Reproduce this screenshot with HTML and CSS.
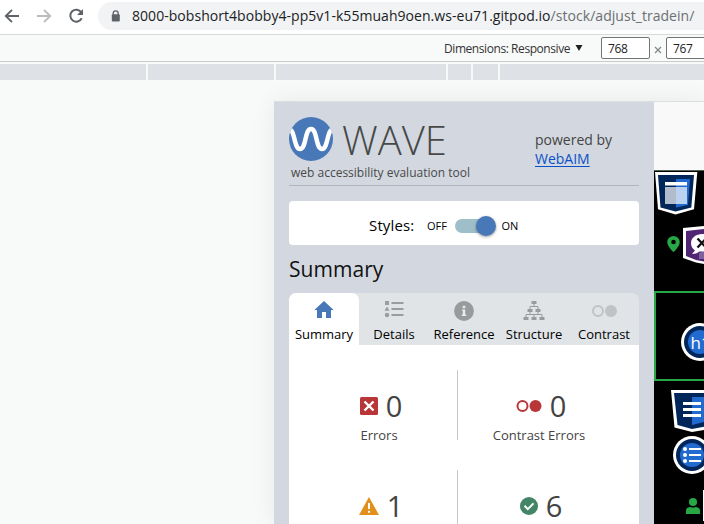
FILE: index.html
```html
<!DOCTYPE html>
<html lang="en">
<head>
<meta charset="utf-8">
<title>WAVE</title>
<link rel="stylesheet" href="styles.css">
</head>
<body>
<header class="browser">
  <svg class="nav" width="98" height="34" viewBox="0 0 98 34" fill="none" stroke-width="1.9">
    <path d="M19 16H7M12 9.8L5.8 16l6.2 6.2" stroke="#5f6368"/>
    <path d="M37 16h12.500M44 9.800L50.200 16L44 22.200" stroke="#babcbe"/>
    <path d="M81.300 12.300A6 6 0 1 0 81.700 18.300" stroke="#5f6368" stroke-width="2"/>
    <path d="M83 9v6h-6z" fill="#5f6368"/>
  </svg>
  <div class="address">
    <svg width="10" height="13" viewBox="0 0 10 13"><path d="M2.200 5V3.400a2.500 2.500 0 0 1 5 0V5" fill="none" stroke="#5f6368" stroke-width="1.300"/><rect x=".8" y="4.200" width="8" height="7.300" rx="1" fill="#5f6368"/></svg>
    <span class="url">8000-bobshort4bobby4-pp5v1-k55muah9oen.ws-eu71.gitpod.io<span class="path">/stock/adjust_tradein/</span></span>
  </div>
</header>
<div class="devicebar">
  <span class="dims">Dimensions: Responsive</span>
  <svg class="caret" width="8" height="8" viewBox="0 0 8 8"><path d="M.5 1h7L4 7z" fill="#202124"/></svg>
  <span class="size">768</span>
  <svg class="times" width="8" height="8" viewBox="0 0 8 8"><path d="M1 1l6 6M7 1L1 7" stroke="#80868b" stroke-width="1.200"/></svg>
  <span class="size">767</span>
</div>
<div class="ruler"><i></i><i></i><i></i><i></i><i></i><i></i></div>
<main class="viewport">
  <section class="wave">
    <div class="brand">
      <svg class="logo" width="44" height="44" viewBox="0 0 44 44"><defs><clipPath id="disc"><circle cx="22" cy="22" r="22"/></clipPath></defs><circle cx="22" cy="22" r="22" fill="#4878b8"/><path clip-path="url(#disc)" d="M-1 13C6 9 4.500 32 11 32S15.500 12 22 12S26.500 32 33 32S38 9 45 13" fill="none" stroke="#fff" stroke-width="4.500"/></svg>
      <h1 class="name">WAVE</h1>
      <div class="power">powered by<br><a href="#">WebAIM</a></div>
      <p class="tagline">web accessibility evaluation tool</p>
    </div>
    <div class="styles">
      <span class="styles-label">Styles:</span><span class="off">OFF</span>
      <span class="switch"><span class="knob"></span></span><span class="on">ON</span>
    </div>
    <h2 class="heading">Summary</h2>
    <nav class="tabs">
      <div class="tab active"><svg width="20" height="20" viewBox="0 0 20 20"><path d="M10 1L.3 10H3v8h5v-6h4v6h5v-8h2.700z" fill="#4878b8"/></svg><span>Summary</span></div>
      <div class="tab"><svg width="20" height="20" viewBox="0 0 20 20" fill="#9a9c9e"><rect x="1" y="1" width="4" height="4"/><path d="M3 6.500l2.500 4.200h-5z"/><circle cx="3" cy="15" r="2.200"/><path d="M7.500 2h12v2h-12zM7.500 8h12v2h-12zM7.500 14h12v2h-12z"/></svg><span>Details</span></div>
      <div class="tab"><svg class="info" width="20" height="20" viewBox="0 0 20 20"><circle cx="10" cy="10" r="9.900" fill="#989a9c"/><path d="M8.700 4.800h2.600v2.400H8.700zM8.200 8.500h3v5h1V15H7.800v-1.500h1V10h-.6z" fill="#e8eaec"/></svg><span>Reference</span></div>
      <div class="tab"><svg width="22" height="20" viewBox="0 0 22 20"><g fill="#999b9d"><path d="M8.500 1h5v3h-5zM4.500 9h5v3h-5zM12.500 9h5v3h-5zM.5 17h5v3h-5zM8.500 17h5v3h-5zM16.500 17h5v3h-5z"/></g><path d="M11 4v2.500M7 9V6.500h8V9M7 12v2.500M15 12v2.500M3 17v-2.500h16V17M11 14.500V17" fill="none" stroke="#999b9d"/></svg><span>Structure</span></div>
      <div class="tab"><svg width="26" height="20" viewBox="0 0 26 20"><circle cx="7" cy="11" r="5" fill="none" stroke="#c0c3c5" stroke-width="2"/><circle cx="20" cy="11" r="6" fill="#c0c3c5"/></svg><span>Contrast</span></div>
    </nav>
    <div class="results">
      <div class="cell"><div class="count"><svg width="18" height="18" viewBox="0 0 18 18"><rect width="18" height="18" rx="1.500" fill="#b93638"/><path d="M4.500 4.500l9 9M13.500 4.500l-9 9" stroke="#fff" stroke-width="2.400"/></svg><b>0</b></div><span class="kind">Errors</span></div>
      <div class="cell right"><div class="count"><svg width="26" height="14" viewBox="0 0 26 14"><circle cx="6.500" cy="7" r="5" fill="none" stroke="#b93638" stroke-width="2"/><circle cx="19.500" cy="7" r="6" fill="#b93638"/></svg><b>0</b></div><span class="kind">Contrast Errors</span></div>
      <div class="cell"><div class="count"><svg width="20" height="18" viewBox="0 0 20 18"><path d="M10 0l10 18H0z" fill="#e38f1c"/><path d="M9 6h2v6H9zM9 13.800h2v2H9z" fill="#fff"/></svg><b>1</b></div></div>
      <div class="cell right"><div class="count"><svg width="18" height="18" viewBox="0 0 18 18"><circle cx="9" cy="9" r="9" fill="#458567"/><path d="M4.500 8.800l3.300 3.300 5.700-5.700" fill="none" stroke="#fff" stroke-width="2"/></svg><b>6</b></div></div>
    </div>
  </section>
  <section class="page">
    <div class="topbar"></div>
    <div class="canvas">
      <svg width="50" height="354" viewBox="654 170 50 354">
        <path d="M654 170.500h50" stroke="#53604f"/>
        <path d="M655 172h42.300l-3.300 37.300-18.500 5.200-17.500-5.200z" fill="#fff"/>
        <path d="M658 175h36l-2.700 32.500-15.800 4-15-4z" fill="#00265a"/>
        <path d="M676 179h14l-2 26-12 2.500z" fill="#216bd0"/>
        <path d="M665 182h22v3.500h-22z" fill="#fff"/><path d="M665 187h11v17h-11z" fill="#b1bdcc"/><path d="M676 187h11v17h-11z" fill="#bad1ef"/>
        <path d="M673.500 236a6.200 6.200 0 0 0-6.200 6.200c0 4.500 6.200 9.800 6.200 9.800s6.200-5.300 6.200-9.800a6.200 6.200 0 0 0-6.200-6.200zm0 3.700a2.300 2.300 0 1 1 0 4.600 2.300 2.300 0 0 1 0-4.600z" fill="#28a745"/>
        <path d="M683 228l21-2v38l-8-1.500-13-4.500z" fill="#fff"/><path d="M686 231l18-2v32.500l-8-1.500-10-4z" fill="#502673"/>
        <path d="M699 253l5-2v8h-5z" fill="#8061a0"/>
        <path d="M702.500 234c-7 0-11.500 4-11.500 9 0 4 2 6 4 7.500l-3 3.500c4 0 6-1.500 7.500-2.500H704V234z" fill="#fff"/><path d="M697.500 238.500l8.500 9M697.500 247.500l8.500-9" stroke="#111" stroke-width="2.300"/>
        <path d="M704 292h-49v88h49" fill="none" stroke="#28a745" stroke-width="2"/>
        <circle cx="700" cy="342" r="19" fill="#fff"/><circle cx="700" cy="342" r="16" fill="#00265a"/><circle cx="700" cy="342" r="12" fill="#216bd0"/>
        <text class="h-mark" x="690.500" y="349">h1</text>
        <path d="M671 390h33v40l-12 2-17.500-4.500z" fill="#fff"/><path d="M674 393h30v33.800l-12 2.200-14.500-4z" fill="#00265a"/><path d="M692 397h12v25l-12 3z" fill="#216bd0"/>
        <path d="M683 402h18v3h-18zM683 408h18v3h-18zM683 414h18v3h-18z" fill="#fff"/>
        <circle cx="692" cy="455" r="19" fill="#fff"/><circle cx="692" cy="455" r="16" fill="#00265a"/><circle cx="692" cy="455" r="12" fill="#216bd0"/>
        <g fill="#fff"><circle cx="685" cy="449" r="2"/><circle cx="685" cy="455" r="2"/><circle cx="685" cy="461" r="2"/><path d="M689 448h12v2h-12zM689 454h12v2h-12zM689 460h12v2h-12z"/></g>
        <circle cx="693" cy="502" r="4" fill="#28a745"/><path d="M686 514v-3c0-3 2-4 4.500-4 1 .7 4 .7 5 0 2.500 0 4.500 1 4.500 4v3z" fill="#28a745"/>
        <path d="M703 490h1v31h-1z" fill="#fff"/>
      </svg>
    </div>
  </section>
</main>
</body>
</html>
```
FILE: styles.css
```css
* { box-sizing: border-box; }
body { margin: 0; width: 704px; height: 524px; overflow: hidden; background: #f8faf9; font-family: "Open Sans", sans-serif; color: #000; display: flex; flex-direction: column; white-space: nowrap; }
svg { display: block; flex: none; }
.browser { height: 35px; flex: none; display: flex; background: #fff; border-bottom: 1px solid #d5d9d8; }
.address { flex: 1; height: 28px; margin-top: 2px; border-radius: 14px 0 0 14px; background: #f1f3f4; display: flex; align-items: center; padding-left: 13px; gap: 11px; }
.url { font-size: 14px; letter-spacing: .045px; color: #202124; line-height: 28px; }
.path { color: #6b6f73; }
.devicebar { height: 27px; flex: none; border-bottom: 1px solid #c8cbca; display: flex; align-items: center; padding-left: 444px; font-size: 12px; color: #333; }
.dims { width: 131px; flex: none; letter-spacing: -.43px; }
.caret { margin-right: 18px; }
.size { width: 49px; height: 22px; flex: none; border: 1px solid #747474; border-radius: 2px; background: #fff; padding-left: 6px; line-height: 21px; letter-spacing: -.3px; color: #222; }
.times { margin: 4px 4px 0; }
.ruler { height: 18px; flex: none; padding-top: 2px; display: grid; grid-template-columns: 146px 126px 170px 23px 25px 204px; column-gap: 2px; }
.ruler i { background: #dee1e6; }
.viewport { flex: 1; min-height: 0; margin: 21px 0 0 274px; display: flex; border-top: 1px solid #dddfdf; box-shadow: 0 0 24px rgba(0,0,0,.07); background: #d3d8e0; }
.wave { width: 380px; flex: none; padding: 0 15px; background: #d3d8e0; overflow: hidden; height: 422px; }
.brand { height: 84px; padding-top: 15px; border-bottom: 1px solid #b0b5bb; display: grid; grid-template-columns: 44px 202px 1fr; grid-template-rows: 44px 24px; }
.name { margin: 0; padding-left: 9px; font-weight: 300; font-size: 40px; line-height: 44px; padding-top: 1px; height: 44px; color: #484848; }
.power { padding-top: 13px; font-size: 14px; line-height: 19px; color: #444; }
.power a { color: #0950c8; text-underline-offset: 2px; }
.tagline { grid-column: 1 / 3; margin: 0; padding-left: 2px; font-size: 12px; line-height: 23px; color: #494949; }
.styles { height: 44px; margin-top: 15px; border-radius: 4px; background: #fff; display: flex; align-items: center; padding: 5px 0 0 80px; }
.styles-label { font-size: 15px; width: 58px; letter-spacing: .15px; margin-top: -2px; }
.off, .on { font-size: 11px; }
.off { width: 28px; }
.switch { width: 36px; height: 14px; border-radius: 7px; background: #9ebfc9; display: flex; align-items: center; justify-content: flex-end; }
.knob { width: 20px; height: 20px; flex: none; margin-right: -5px; border-radius: 50%; background: #4878b8; box-shadow: 0 1px 3px rgba(0,0,0,.4); }
.on { margin-left: 10.5px; }
.heading { margin: 8px 0 0; height: 40px; line-height: 33px; font-size: 21px; font-weight: 400; letter-spacing: .05px; color: #111; }
.tabs { height: 52px; display: grid; grid-template-columns: repeat(5, 70px); background: #e1e4e7; border-radius: 7px 7px 0 0; }
.tab { padding-top: 7px; display: flex; flex-direction: column; align-items: center; font-size: 13px; line-height: 18px; gap: 5px; }
.info { margin: 1px 0 -1px; }
.active { background: #fff; border-radius: 7px 7px 0 0; }
.results { height: 300px; background: #fff; padding-top: 25px; display: grid; grid-template-columns: 168px 1fr; grid-auto-rows: 70px; row-gap: 30px; }
.cell { display: flex; flex-direction: column; align-items: center; padding: 16px 0 0 12px; }
.right { border-left: 1px solid #c6c8ca; padding-left: 0; padding-right: 19px; }
.count { height: 40px; display: flex; align-items: center; gap: 8px; padding-left: 4px; }
.count b { font-size: 29px; font-weight: 400; color: #444; line-height: 40px; }
.kind { font-size: 13px; line-height: 18px; color: #444; }
.page { flex: 1; background: #000; }
.topbar { height: 68px; background: #f9f9f9; }
.h-mark { font: 17px "Open Sans", sans-serif; fill: #fff; }
```
